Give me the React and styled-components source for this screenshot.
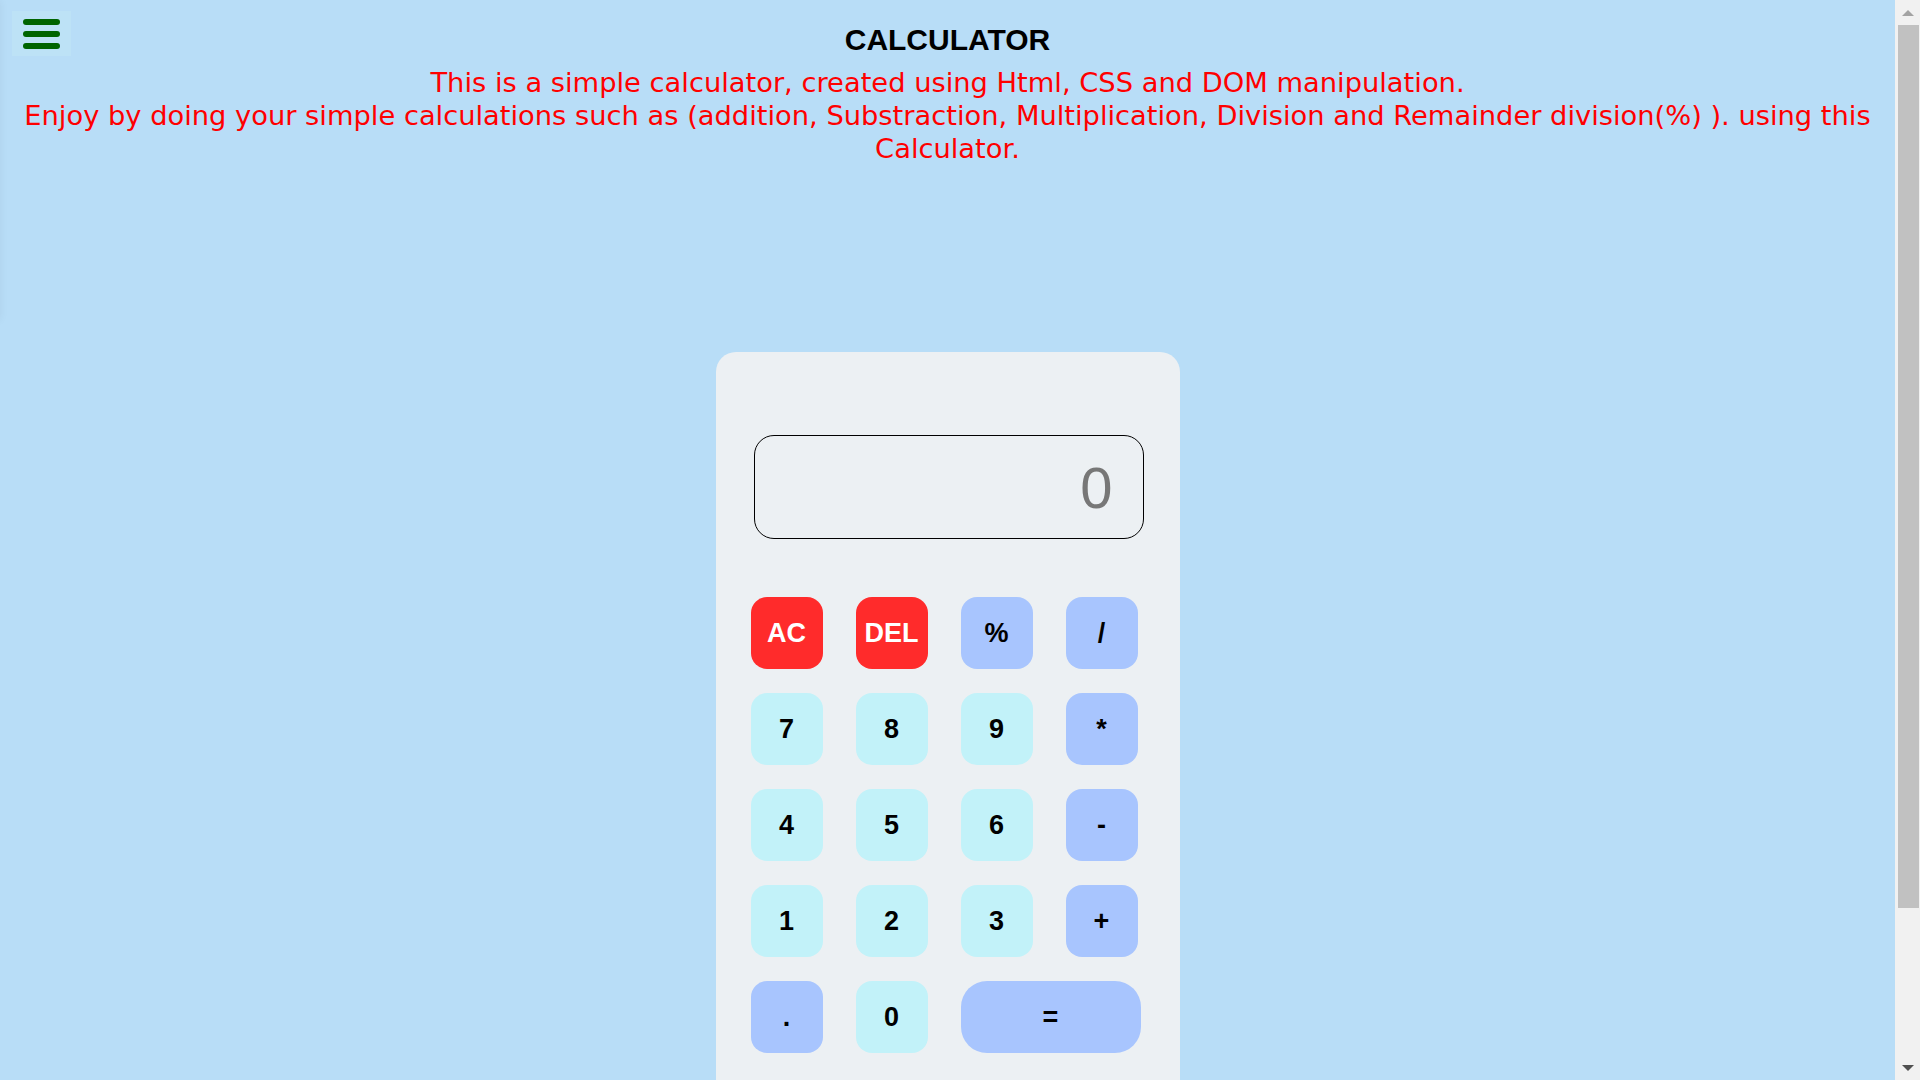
import React, { useState } from 'react'
import styled, { createGlobalStyle } from 'styled-components'

const GlobalStyle = createGlobalStyle`
  html, body {
    margin: 0;
    padding: 0;
  }
  body {
    background: #b8ddf7;
    font-family: 'Liberation Sans', Arial, sans-serif;
  }
`

const keys = [
  { label: 'AC', kind: 'clear' },
  { label: 'DEL', kind: 'clear' },
  { label: '%', kind: 'op' },
  { label: '/', kind: 'op' },
  { label: '7', kind: 'num' },
  { label: '8', kind: 'num' },
  { label: '9', kind: 'num' },
  { label: '*', kind: 'op' },
  { label: '4', kind: 'num' },
  { label: '5', kind: 'num' },
  { label: '6', kind: 'num' },
  { label: '-', kind: 'op' },
  { label: '1', kind: 'num' },
  { label: '2', kind: 'num' },
  { label: '3', kind: 'num' },
  { label: '+', kind: 'op' },
  { label: '.', kind: 'op' },
  { label: '0', kind: 'num' },
  { label: '=', kind: 'op', wide: true },
]

const App = () => {
  const [value, setValue] = useState('0')

  const press = (label) => {
    if (label === 'AC') return setValue('0')
    if (label === 'DEL') return setValue(v => (v.length > 1 ? v.slice(0, -1) : '0'))
    if (label === '=') {
      try {
        // eslint-disable-next-line no-new-func
        const res = Function('return (' + value + ')')()
        setValue(String(res))
      } catch (e) {
        setValue('0')
      }
      return
    }
    setValue(v => (v === '0' && label !== '.' ? label : v + label))
  }

  return (
    <>
      <GlobalStyle />
      <SideShadow />
      <MenuToggle aria-label="menu">
        <Bar />
        <Bar />
        <Bar />
      </MenuToggle>
      <Page>
        <Title>CALCULATOR</Title>
        <Intro>
          This is a simple calculator, created using Html, CSS and DOM manipulation.<br />
          Enjoy by doing your simple calculations such as (addition, Substraction, Multiplication, Division and Remainder division(%) ). using this Calculator.
        </Intro>

        <Calc>
          <Screen>{value}</Screen>
          <Keys>
            {keys.map(k => (
              <Key key={k.label} kind={k.kind} $wide={k.wide} onClick={() => press(k.label)}>
                {k.label}
              </Key>
            ))}
          </Keys>
        </Calc>
      </Page>

      {/* page scrollbar */}
      <ScrollTrack>
        <Arrow $dir="up" />
        <Thumb />
        <Arrow $dir="down" />
      </ScrollTrack>
    </>
  )
}

export default App

const SideShadow = styled.div`
  position: fixed;
  left: -10px;
  top: 0;
  width: 10px;
  height: 320px;
  box-shadow: 0 0 10px rgba(0, 0, 0, 0.06);
`

const MenuToggle = styled.button`
  position: absolute;
  left: 12px;
  top: 11px;
  width: 59px;
  height: 45px;
  border: none;
  background: #bde2f6;
  padding: 0;
  display: flex;
  flex-direction: column;
  align-items: center;
  justify-content: center;
  gap: 6px;
  cursor: pointer;
`

const Bar = styled.span`
  display: block;
  width: 37px;
  height: 6px;
  border-radius: 3px;
  background: #006400;
`

const Page = styled.div`
  margin-right: 25px;
  padding: 23px 0 150px;
  text-align: center;
`

const Title = styled.h1`
  margin: 0;
  font-family: 'Liberation Sans', Arial, sans-serif;
  font-size: 30px;
  line-height: 34px;
  font-weight: bold;
  color: #000;
`

const Intro = styled.p`
  margin: 9px 0 0;
  font-family: 'DejaVu Sans', Verdana, sans-serif;
  font-size: 27.3px;
  line-height: 33px;
  color: #ff0000;
`

const Calc = styled.div`
  width: 464px;
  box-sizing: border-box;
  margin: 187px auto 0;
  padding: 83px 37px 60px 35px;
  background: #ecf0f3;
  border-radius: 20px;
`

const Screen = styled.div`
  box-sizing: border-box;
  width: 390px;
  height: 104px;
  margin-left: 3px;
  padding: 0 30px;
  border: 1px solid #000;
  border-radius: 20px;
  display: flex;
  align-items: center;
  justify-content: flex-end;
  font-family: 'Liberation Sans', Arial, sans-serif;
  font-size: 58px;
  color: #777;
`

const Keys = styled.div`
  margin-top: 58px;
  display: grid;
  grid-template-columns: repeat(4, 72px);
  grid-auto-rows: 72px;
  column-gap: 33px;
  row-gap: 24px;
`

const keyColors = {
  clear: { bg: '#ff2b2b', fg: '#fff' },
  op: { bg: '#a8c5fe', fg: '#000' },
  num: { bg: '#c2f2f9', fg: '#000' },
}

const Key = styled.button`
  border: none;
  padding: 0;
  width: ${p => (p.$wide ? '180px' : '72px')};
  grid-column: ${p => (p.$wide ? 'span 2' : 'auto')};
  border-radius: ${p => (p.$wide ? '26px' : '16px')};
  background: ${p => keyColors[p.kind].bg};
  color: ${p => keyColors[p.kind].fg};
  font-family: 'Liberation Sans', Arial, sans-serif;
  font-size: 27px;
  font-weight: bold;
  cursor: pointer;
`

const ScrollTrack = styled.div`
  position: fixed;
  top: 0;
  right: 0;
  width: 25px;
  height: 100vh;
  background: #f1f1f1;
  display: flex;
  flex-direction: column;
  align-items: center;
`

const Arrow = styled.div`
  flex: 0 0 25px;
  width: 25px;
  display: flex;
  align-items: center;
  justify-content: center;
  margin-top: ${p => (p.$dir === 'down' ? 'auto' : '0')};

  &::before {
    content: '';
    border-left: 6px solid transparent;
    border-right: 6px solid transparent;
    ${p => (p.$dir === 'up'
      ? 'border-bottom: 6px solid #a3a3a3;'
      : 'border-top: 6px solid #505050;')}
  }
`

const Thumb = styled.div`
  flex: 0 0 883px;
  width: 21px;
  margin-left: 2px;
  background: #c1c1c1;
`
